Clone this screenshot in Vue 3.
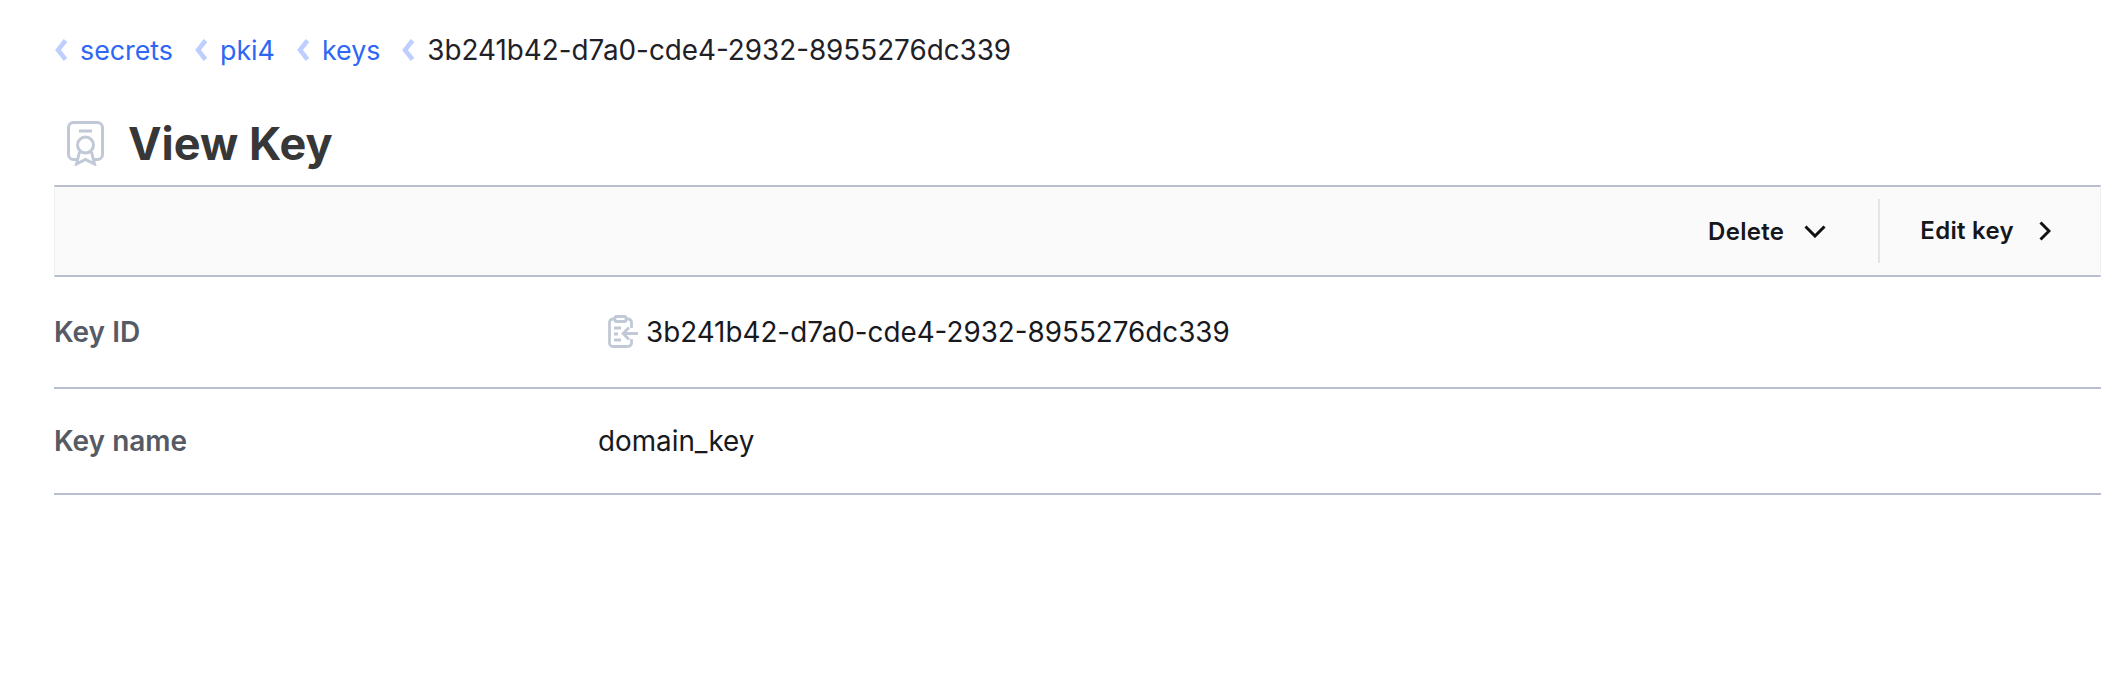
<script setup>
const crumbs = [
  { label: "secrets", link: true },
  { label: "pki4", link: true },
  { label: "keys", link: true },
  { label: "3b241b42-d7a0-cde4-2932-8955276dc339", link: false },
];
</script>

<template>
  <main class="page">
    <nav class="crumbs">
      <span v-for="c in crumbs" :key="c.label" class="crumb" :class="{ link: c.link }">
        <svg class="sep" width="15" height="22" viewBox="0 0 15 22" fill="none">
          <path d="M11.500 1.500 4 11l7.500 9.500" stroke="#bdceff" stroke-width="4.500" />
        </svg>
        <span>{{ c.label }}</span>
      </span>
    </nav>

    <header class="title">
      <svg width="37" height="45" viewBox="0 0 37 45" fill="none" stroke="#c2c9d6" stroke-width="3">
        <path d="M10 38.500H6.500a5 5 0 0 1-5-5v-27a5 5 0 0 1 5-5h24a5 5 0 0 1 5 5v27a5 5 0 0 1-5 5H27" />
        <path d="M12 10h13" />
        <circle cx="18.500" cy="24" r="8" />
        <path d="M12.500 31l-3 12 9-4.500 9 4.500-3-12" />
      </svg>
      <h1>View Key</h1>
    </header>

    <div class="toolbar">
      <button class="tool" type="button">
        Delete
        <svg width="22" height="13" viewBox="0 0 22 13" fill="none">
          <path d="M1.500 1.500 11 11l9.500-9.500" stroke="#111" stroke-width="3" />
        </svg>
      </button>
      <span class="divider"></span>
      <button class="tool edit" type="button">
        Edit key
        <svg width="12" height="20" viewBox="0 0 12 20" fill="none">
          <path d="M1.500 1.500 10 10l-8.500 8.500" stroke="#111" stroke-width="3" />
        </svg>
      </button>
    </div>

    <div class="row first">
      <div class="label">Key ID</div>
      <div class="value">
        <svg class="copy" width="30" height="33" viewBox="0 0 30 33" fill="none" stroke="#c2c9d6" stroke-width="2.800">
          <path d="M7 4H5a3.500 3.500 0 0 0-3.500 3.500v20A3.500 3.500 0 0 0 5 31.500h15a3.500 3.500 0 0 0 3.500-3.500v-4" />
          <path d="M18 4h2a3.500 3.500 0 0 1 3.500 3.500V13" />
          <rect x="7" y="1.500" width="11" height="5" rx="1.500" />
          <path d="M6 13h7M6 19h4M6 25h7" />
          <path d="M30 18.500H15M21 12.500l-6 6 6 6" />
        </svg>
        <span>3b241b42-d7a0-cde4-2932-8955276dc339</span>
      </div>
    </div>
    <div class="row">
      <div class="label">Key name</div>
      <div class="value plain">domain_key</div>
    </div>
  </main>
</template>

<style>
body {
  background: #fff;
}
</style>

<style scoped>
.page {
  width: 2047px;
  margin-left: 54px;
  padding-top: 32px;
  font-family: Inter, "Liberation Sans", sans-serif;
  color: #1f2126;
}

.crumbs {
  display: flex;
  gap: 21px;
  height: 36px;
  font-size: 27.800px;
  line-height: 36px;
}

.crumb {
  display: flex;
  align-items: center;
  gap: 11px;
}

.crumb.link {
  color: #2e67f5;
  font-size: 26.800px;
}

.title {
  display: flex;
  align-items: center;
  gap: 24px;
  height: 83px;
  padding: 34px 0 0 13px;
}

h1 {
  margin: 0;
  font-size: 45px;
  font-weight: 700;
  color: #373737;
}

.toolbar {
  display: flex;
  align-items: center;
  justify-content: flex-end;
  height: 92px;
  background: #fafafa;
  border-top: 2px solid #b9bfcd;
  border-bottom: 2px solid #b9bfcd;
  border-left: 1px solid #eceef2;
  border-right: 1px solid #eceef2;
  box-sizing: border-box;
  padding-right: 49px;
}

.tool {
  display: flex;
  align-items: center;
  gap: 20px;
  border: 0;
  background: none;
  padding: 0;
  font: 600 24px Inter, "Liberation Sans", sans-serif;
  letter-spacing: 0.3px;
  color: #15171c;
}

.tool.edit {
  gap: 25px;
  margin-top: -1px;
}

.divider {
  width: 2px;
  height: 64px;
  margin: 0 40px 0 52px;
  background: #e2e4e8;
}

.row {
  display: flex;
  align-items: center;
  height: 106px;
  border-bottom: 2px solid #b9bfd0;
  box-sizing: border-box;
}

.row.first {
  height: 112px;
}

.label {
  width: 544px;
  font-size: 28px;
  font-weight: 600;
  color: #565a64;
}

.value {
  display: flex;
  align-items: center;
  gap: 8px;
  margin-left: 10px;
  font-size: 27.800px;
  color: #17191e;
}

.value.plain {
  margin-left: 0;
}

.copy {
  margin-top: -2px;
}
</style>
